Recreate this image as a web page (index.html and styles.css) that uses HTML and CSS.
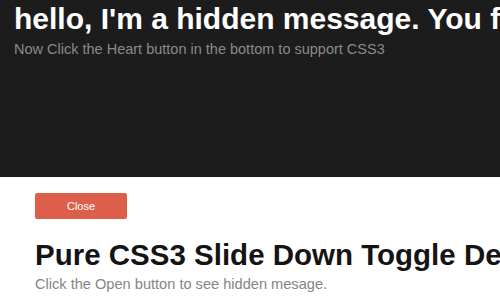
FILE: index.html
```html
<!DOCTYPE html>
<html>
<head>
<meta charset="utf-8">
<link rel="stylesheet" href="styles.css">
</head>
<body>
<div class="panel">
  <h1 class="panel-title">hello, I'm a hidden message. You found it.</h1>
  <p class="panel-sub">Now Click the Heart button in the bottom to support CSS3</p>
</div>
<div class="main">
  <button class="toggle">Close</button>
  <h2 class="main-title">Pure CSS3 Slide Down Toggle Demo</h2>
  <p class="main-sub">Click the Open button to see hidden mesage.</p>
</div>
</body>
</html>
```
FILE: styles.css
```css
html, body {
  margin: 0;
  padding: 0;
  background: #fff;
  font-family: "Liberation Sans", Arial, sans-serif;
  overflow: hidden;
  width: 500px;
  height: 303px;
}
.panel {
  background: #1c1c1c;
  height: 177px;
  box-sizing: border-box;
  padding: 2px 14px 0;
  white-space: nowrap;
  overflow: hidden;
}
.panel-title {
  margin: 0;
  font-size: 30px;
  line-height: 34px;
  font-weight: bold;
  color: #fff;
}
.panel-sub {
  margin: 4px 0 0;
  font-size: 14.5px;
  line-height: 18px;
  color: #8a8a8a;
}
.main {
  padding: 16px 35px 0;
  white-space: nowrap;
  overflow: hidden;
}
.toggle {
  display: block;
  width: 92px;
  height: 26px;
  border: 0;
  border-radius: 2px;
  background: #de5f49;
  color: #fff;
  font-family: "Liberation Sans", Arial, sans-serif;
  font-size: 11px;
  padding: 0;
  margin: 0;
}
.main-title {
  margin: 19px 0 0;
  font-size: 29.5px;
  line-height: 34px;
  font-weight: bold;
  color: #141414;
}
.main-sub {
  margin: 3px 0 0;
  font-size: 14.6px;
  line-height: 18px;
  color: #858585;
}
```
